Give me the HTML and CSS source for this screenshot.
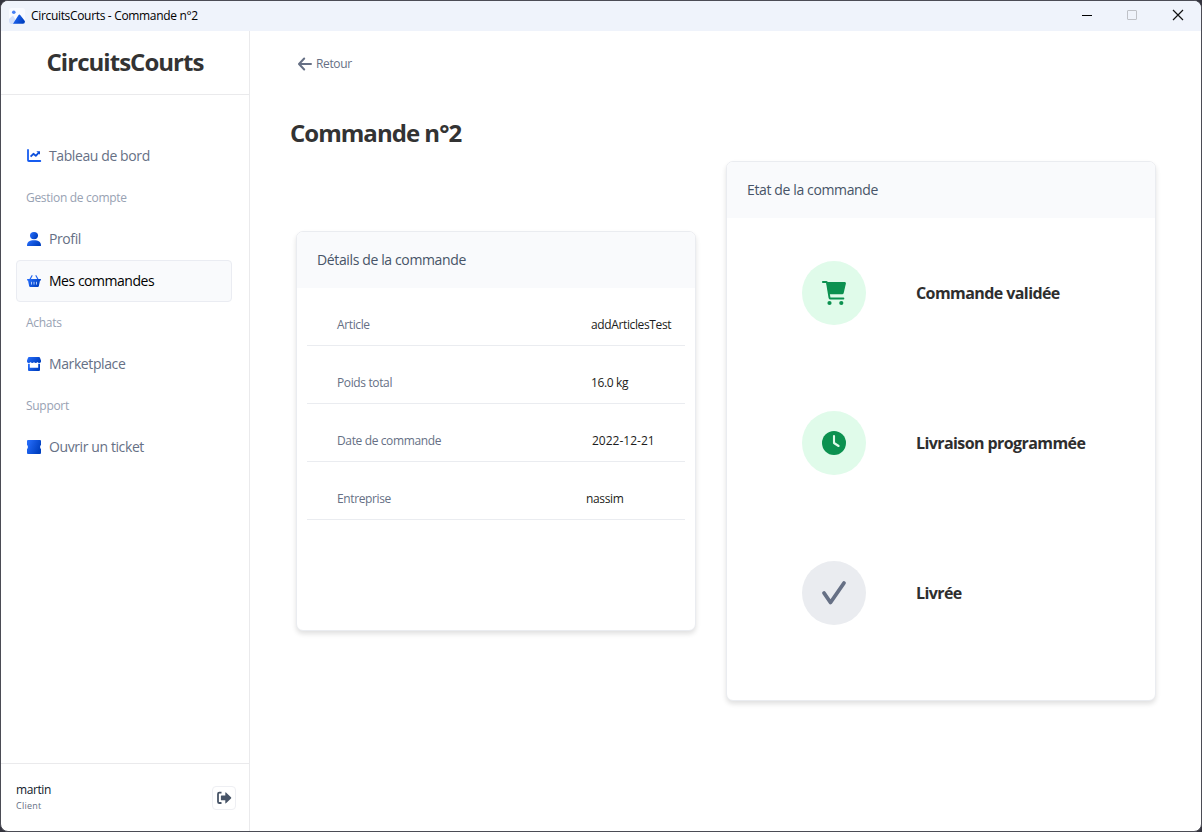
FILE: index.html
```html
<!DOCTYPE html>
<html lang="fr">
<head>
<meta charset="utf-8">
<title>CircuitsCourts - Commande n°2</title>
<link rel="stylesheet" href="styles.css">
</head>
<body>
<svg class="defs" width="0" height="0" aria-hidden="true">
  <defs>
    <linearGradient id="blue" x1="0" y1="0" x2="1" y2="0.45"><stop offset="0" stop-color="#2970ff"/><stop offset="1" stop-color="#0040c1"/></linearGradient>
  </defs>
</svg>
<div class="window">
  <header class="titlebar">
    <svg class="app-icon" width="16" height="16" viewBox="0 0 16 16"><rect width="16" height="16" rx="2.5" fill="#f8faff"/><path d="M0 11 4 7.500 9 16H2.500Q0 16 0 13Z" fill="#d3e0fb"/><circle cx="4.800" cy="4.200" r="1.800" fill="#4680f5"/><path d="M4 15.800 9.400 7.200Q10.400 5.800 11.400 7.200L16 13.300Q16 15.800 14 15.800Z" fill="url(#blue)"/></svg>
    <span class="window-title">CircuitsCourts - Commande n°2</span>
    <div class="controls">
      <svg width="12" height="12" viewBox="0 0 12 12"><path d="M1 6.500h10" stroke="#000"/></svg>
      <svg width="12" height="12" viewBox="0 0 12 12"><rect x="1.500" y="1.500" width="9" height="9" rx=".5" fill="none" stroke="#bfc1c7"/></svg>
      <svg width="12" height="12" viewBox="0 0 12 12"><path d="m1 1 10 10M11 1 1 11" stroke="#111" stroke-width="1.200"/></svg>
    </div>
  </header>
  <div class="body">
    <aside class="sidebar">
      <div class="brand"><span>CircuitsCourts</span></div>
      <nav class="nav">
        <a class="item"><svg width="16" height="16" viewBox="0 0 16 16"><path d="M2 2v10.200q0 .8.800.8H14.300" fill="none" stroke="#175cf0" stroke-width="1.800" stroke-linecap="round"/><path d="m4.600 8.700 2.800-2.900 2.400 2L13 4.400" fill="none" stroke="#0d4fdb" stroke-width="1.800" stroke-linejoin="round"/><path d="M10.400 3.200H14v3.500Z" fill="#0d4fdb"/></svg><span>Tableau de bord</span></a>
        <div class="group"><span>Gestion de compte</span></div>
        <a class="item"><svg width="16" height="16" viewBox="0 0 16 16" fill="url(#blue)"><ellipse cx="8" cy="4.600" rx="4" ry="3.600"/><path d="M1 14.500C1 10.800 3.500 9.200 8 9.200s7 1.600 7 5.300Q15 15 14.400 15H1.600Q1 15 1 14.500Z"/></svg><span>Profil</span></a>
        <a class="item active"><svg width="16" height="16" viewBox="0 0 16 16"><path d="m3.600 7 2.400-4.300M12.400 7 10 2.700" stroke="#2265ef" stroke-width="1.200" stroke-linecap="round"/><path d="M1.500 6h13q.5 0 .5.500v.6q0 .5-.5.500H14l-1.200 5.700q-.2.700-1 .700H4.200q-.8 0-1-.7L2 7.600h-.5Q1 7.600 1 7.100v-.6Q1 6 1.500 6Z" fill="url(#blue)"/><path d="M5.500 8.800v2.800M8 8.800v2.800M10.500 8.800v2.800" stroke="#dce8ff" stroke-width=".8"/></svg><span>Mes commandes</span></a>
        <div class="group"><span>Achats</span></div>
        <a class="item"><svg width="16" height="16" viewBox="0 0 16 16" fill="url(#blue)"><path d="M3 1h10q.6 0 .9.600L15 4.500v1.200Q14.600 7 13.200 7q-1.300 0-1.800-.9Q10.800 7 9.700 7 8.500 7 8 6.100 7.500 7 6.300 7 5.200 7 4.600 6.100 4.100 7 2.800 7 1.400 7 1 5.700V4.500l1.100-2.900Q2.400 1 3 1Z"/><path d="M2 7.800h1.800v4h8.400v-4H14V14q0 1-1 1H3q-1 0-1-1Z"/></svg><span>Marketplace</span></a>
        <div class="group"><span>Support</span></div>
        <a class="item"><svg width="16" height="16" viewBox="0 0 16 16"><path d="M2 1h12q1 0 1 1v4q-.9.500-.9 2t.9 2V14q0 1-1 1H2q-1 0-1-1v-4Q1.900 9.500 1.900 8T1 6V2q0-1 1-1Z" fill="url(#blue)"/></svg><span>Ouvrir un ticket</span></a>
      </nav>
      <footer class="account">
        <div class="who"><div class="name">martin</div><div class="role">Client</div></div>
        <button class="logout" aria-label="Déconnexion"><svg width="16" height="16" viewBox="0 0 16 16"><path d="M5.500 2.700H3.300Q2 2.700 2 4v7.700q0 1.300 1.300 1.300h2.200" fill="none" stroke="#475467" stroke-width="1.800"/><path d="M5.300 5.500h4V2.800q0-.7.700-.3l5 4.700q.6.700 0 1.300l-5 4.700q-.7.500-.7-.3v-2.600h-4Q4.900 10.300 4.900 9.900V5.900q0-.4.400-.4Z" fill="#475467"/></svg></button>
      </footer>
    </aside>
    <main class="main">
      <a class="back"><svg width="16" height="16" viewBox="0 0 16 16"><path d="M14 8H2.500M7.200 2.500 2 8l5.200 5.500" fill="none" stroke="#667085" stroke-width="2" stroke-linecap="round" stroke-linejoin="round"/></svg><span>Retour</span></a>
      <h1 class="heading">Commande n°2</h1>
      <div class="cards">
        <section class="card details">
          <h2 class="card-head"><span>Détails de la commande</span></h2>
          <dl class="rows">
            <div class="row"><dt>Article</dt><dd>addArticlesTest</dd></div>
            <div class="row"><dt>Poids total</dt><dd>16.0 kg</dd></div>
            <div class="row"><dt>Date de commande</dt><dd class="date">2022-12-21</dd></div>
            <div class="row"><dt>Entreprise</dt><dd class="company">nassim</dd></div>
          </dl>
        </section>
        <section class="card status">
          <h2 class="card-head"><span>Etat de la commande</span></h2>
          <div class="step"><div class="disc done"><svg width="26" height="26" viewBox="0 0 26 26" fill="#0c9150"><path d="M1.900 2h3.200q.7 0 .9.700L8.500 17.700q.2.800 1 .8H22.400" fill="none" stroke="#0c9150" stroke-width="1.900" stroke-linecap="round"/><path d="M5.400 2H23.800q1.400 0 1.100 1.500l-2.200 9.600q-.3 1.200-1.500 1.200H7.700Z"/><circle cx="8.500" cy="23" r="2.100"/><circle cx="20.300" cy="23" r="2.100"/></svg></div><strong>Commande validée</strong></div>
          <div class="step"><div class="disc done"><svg width="26" height="26" viewBox="0 0 26 26"><circle cx="13" cy="13" r="12" fill="#0c9150"/><path d="M13 6v7l4.600 3" fill="none" stroke="#e0fbea" stroke-width="2.100" stroke-linecap="round" stroke-linejoin="round"/></svg></div><strong>Livraison programmée</strong></div>
          <div class="step"><div class="disc"><svg width="26" height="26" viewBox="0 0 26 26"><path d="m3 13 6.500 9.500L23 3" fill="none" stroke="#667085" stroke-width="3.800" stroke-linecap="round" stroke-linejoin="round"/></svg></div><strong>Livrée</strong></div>
        </section>
      </div>
    </main>
  </div>
</div>
</body>
</html>
```
FILE: styles.css
```css
* { box-sizing: border-box; }
body { margin: 0; background: #34343e; font-family: "Open Sans", "Noto Sans", sans-serif; }
.defs { position: absolute; }
.window { width: 1202px; height: 832px; border: 1px solid #4b4c55; border-radius: 8px; background: #fff; overflow: hidden; display: flex; flex-direction: column; }
span, dt, dd, strong { white-space: nowrap; }
svg { display: block; flex: none; }

.titlebar { height: 30px; flex: none; background: #eff3fb; display: flex; align-items: center; padding: 0 17px 2px 8px; }
.app-icon { margin-top: 2px; }
.window-title { margin-left: 6px; font-size: 12px; color: #000; letter-spacing: -.33px; }
.controls { margin-left: auto; display: flex; gap: 34px; }
.controls svg:first-child { margin-right: -1px; }

.body { flex: 1; display: flex; min-height: 0; }
.sidebar { width: 249px; flex: none; border-right: 1px solid #eaeaec; display: flex; flex-direction: column; }
.brand { height: 64px; flex: none; border-bottom: 1px solid #eaeaec; padding-bottom: 2px; display: flex; justify-content: center; align-items: center; color: #333; font-size: 24px; font-weight: 700; letter-spacing: -.97px; }
.nav { padding: 40px 17px 0 15px; flex: 1; }
.item { height: 42px; border: 1px solid transparent; border-radius: 4px; padding-left: 9px; display: flex; align-items: center; gap: 7px; font-size: 14px; color: #667085; letter-spacing: -.4px; }
.item span { margin-top: -2px; }
.item.active { background: #f9fafc; border-color: #eaecf2; color: #000; letter-spacing: -.47px; }
.group { height: 41px; padding-left: 10px; display: flex; align-items: center; font-size: 12px; color: #98a2b3; letter-spacing: -.3px; }
.account { height: 68px; border-top: 1px solid #eaeaec; padding: 0 13px 0 15px; display: flex; justify-content: space-between; align-items: center; }
.name { margin-top: -1px; font-size: 12px; line-height: 17px; color: #101828; letter-spacing: -.4px; }
.role { font-size: 9px; line-height: 16px; color: #667085; letter-spacing: .25px; }
.logout { width: 24px; height: 24px; padding: 0; border: 1px solid #eeeff3; border-radius: 4px; background: #fff; display: flex; justify-content: center; align-items: center; }

.main { flex: 1; padding: 23px 45px 0 40px; }
.back { height: 20px; padding-left: 7px; display: flex; align-items: center; gap: 3px; font-size: 12px; color: #667085; letter-spacing: -.35px; }
.back span { margin-top: -2px; }
.heading { margin: 42px 0 0; height: 35px; line-height: 34px; font-size: 24px; color: #333; letter-spacing: -.98px; }
.cards { margin-top: 10px; padding-left: 6px; display: flex; align-items: center; gap: 30px; }
.card { flex: none; border: 1px solid #eaecf0; border-radius: 7px; background: #fff; box-shadow: 0 3px 5px rgba(0,0,0,.12); }
.details { width: 400px; height: 400px; }
.status { width: 430px; height: 540px; }
.card-head { margin: 0; height: 56px; border-radius: 6px 6px 0 0; background: #f9fafc; padding: 0 0 2px 20px; display: flex; align-items: center; font-size: 14px; font-weight: 400; color: #475467; letter-spacing: -.37px; }
.rows { margin: 0; padding: 0 10px; }
.row { height: 58px; padding: 15px 0 0 30px; border-bottom: 1px solid #eaecf0; display: grid; grid-template-columns: 254px 1fr; align-items: center; font-size: 12px; letter-spacing: -.37px; }
.row dt { color: #667085; }
.row dd { margin: 0; color: #1d1d20; }
.row .date { margin-left: 1px; letter-spacing: 0; }
.row .company { margin-left: -5px; }
.step { height: 150px; padding-left: 75px; display: flex; align-items: center; gap: 50px; font-size: 16px; color: #2e2e2e; letter-spacing: -.58px; }
.disc { width: 64px; height: 64px; border-radius: 50%; background: #eaecf0; display: flex; align-items: center; justify-content: center; }
.disc.done { background: #e0fbea; }
```
